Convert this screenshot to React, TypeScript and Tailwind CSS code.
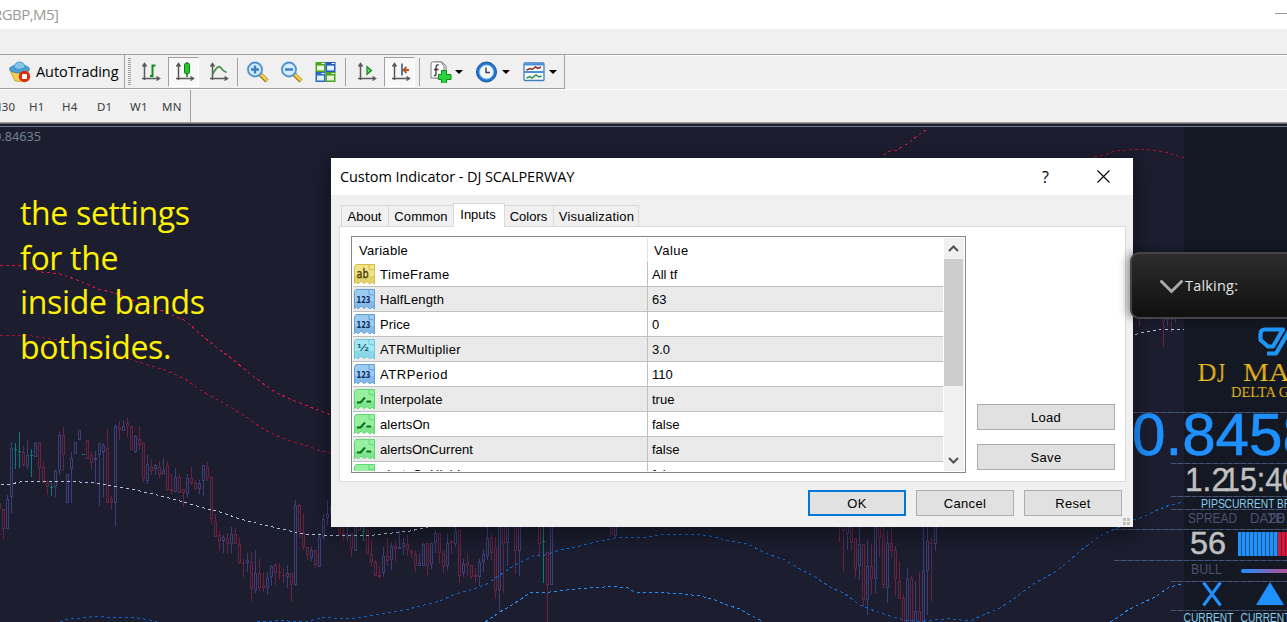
import React from "react";

type Tone = "b" | "r" | "g";
type Candle = [number, number, number, number, number, Tone];

const TONES: Record<Tone, string> = { b: "#3a3f78", r: "#69233f", g: "#067f74" };

// Candles are [x, high, body top, body bottom, low, tone] in thirds of a pixel, relative to each segment's origin.
const SEGMENTS: { x: number; y: number; candles: Candle[] }[] = [
  {
    x: 0,
    y: 400,
    candles: [
      [-2, 310, 310, 328, 328, "r"], [10, 328, 328, 386, 416, "r"], [22, 286, 298, 386, 386, "b"], [34, 126, 145, 290, 338, "b"],
      [46, 130, 148, 148, 206, "g"], [58, 96, 154, 154, 204, "g"], [70, 138, 156, 195, 197, "r"], [82, 121, 166, 197, 206, "b"],
      [94, 147, 166, 166, 230, "g"], [106, 126, 130, 170, 170, "b"], [118, 127, 127, 203, 243, "r"], [130, 184, 202, 250, 250, "r"],
      [142, 240, 250, 262, 286, "r"], [154, 250, 262, 262, 288, "g"], [166, 210, 214, 262, 292, "b"], [178, 96, 106, 214, 224, "b"],
      [190, 81, 106, 166, 212, "r"], [202, 222, 223, 308, 308, "b"], [214, 156, 175, 206, 308, "b"], [226, 127, 127, 163, 163, "b"],
      [238, 91, 91, 119, 119, "b"], [250, 163, 163, 163, 163, "g"], [262, 121, 121, 176, 176, "r"], [274, 156, 166, 188, 206, "r"],
      [286, 154, 175, 179, 252, "b"], [298, 130, 130, 166, 318, "b"], [310, 129, 136, 157, 290, "b"], [322, 88, 145, 308, 308, "r"],
      [334, 288, 298, 308, 330, "r"], [346, 72, 79, 308, 378, "b"], [358, 63, 82, 89, 119, "r"], [370, 60, 79, 92, 92, "b"],
      [382, 54, 70, 79, 110, "r"], [394, 79, 79, 149, 149, "r"], [406, 106, 109, 155, 158, "b"], [418, 79, 118, 136, 150, "r"],
      [430, 127, 130, 236, 245, "r"], [442, 166, 193, 242, 251, "b"], [454, 178, 202, 212, 224, "r"], [466, 192, 196, 206, 224, "b"],
      [478, 184, 202, 224, 233, "r"], [490, 175, 211, 223, 223, "b"], [502, 184, 196, 269, 272, "r"], [514, 223, 268, 272, 281, "r"],
      [526, 205, 232, 277, 277, "b"], [538, 223, 232, 278, 278, "r"], [550, 268, 268, 280, 320, "r"], [562, 223, 235, 281, 293, "b"],
      [574, 202, 235, 250, 256, "r"], [586, 240, 250, 268, 268, "r"], [598, 240, 250, 268, 281, "b"], [610, 196, 196, 244, 287, "b"],
      [622, 187, 202, 233, 242, "r"], [634, 229, 232, 358, 373, "r"], [646, 343, 364, 412, 412, "r"], [658, 394, 406, 422, 452, "r"],
      [670, 405, 412, 424, 458, "b"], [682, 400, 415, 431, 461, "r"], [694, 381, 403, 433, 458, "b"], [706, 385, 403, 433, 433, "r"],
      [718, 412, 433, 488, 491, "r"], [730, 478, 488, 491, 530, "r"], [742, 460, 481, 490, 515, "b"], [754, 457, 487, 566, 602, "r"],
      [766, 451, 520, 572, 578, "b"], [778, 478, 520, 563, 572, "r"], [790, 517, 556, 563, 575, "r"], [802, 515, 535, 563, 584, "b"],
      [814, 495, 499, 530, 557, "b"], [826, 490, 496, 518, 554, "r"], [838, 490, 517, 520, 539, "r"], [850, 505, 526, 529, 548, "r"],
      [862, 496, 520, 530, 563, "b"], [874, 520, 520, 554, 605, "r"], [886, 301, 316, 554, 557, "b"], [898, 311, 316, 395, 413, "r"],
      [910, 338, 400, 442, 449, "r"], [922, 442, 442, 464, 479, "r"], [934, 442, 451, 473, 482, "b"], [946, 451, 451, 496, 505, "r"],
      [958, 400, 412, 500, 500, "b"], [970, 343, 358, 412, 421, "b"], [982, 301, 343, 355, 375, "b"], [994, 319, 319, 346, 346, "b"],
    ],
  },
  {
    x: 330,
    y: 520,
    candles: [
      [28, 0, 0, 44, 44, "r"], [40, 0, 40, 44, 62, "r"], [52, 0, 43, 53, 65, "b"], [64, 40, 40, 88, 112, "r"], [76, 0, 0, 92, 92, "b"],
      [88, 0, 0, 32, 32, "r"], [100, 0, 32, 32, 62, "g"], [112, 30, 30, 101, 101, "r"], [124, 61, 102, 127, 137, "r"],
      [136, 121, 127, 167, 167, "r"], [148, 139, 166, 170, 176, "r"], [160, 82, 109, 160, 170, "b"], [172, 55, 109, 122, 137, "r"],
      [184, 70, 79, 119, 149, "b"], [196, 64, 79, 88, 122, "r"], [208, 31, 81, 88, 88, "b"], [220, 55, 70, 80, 104, "b"],
      [232, 46, 73, 89, 109, "r"], [244, 91, 91, 100, 113, "r"], [256, 90, 103, 137, 155, "r"], [268, 100, 128, 139, 139, "b"],
      [280, 68, 73, 139, 139, "b"], [292, 70, 70, 137, 167, "r"], [304, 70, 70, 131, 146, "b"], [316, 31, 40, 70, 100, "b"],
      [328, 40, 40, 100, 128, "r"], [340, 91, 100, 140, 158, "r"], [352, 43, 70, 137, 149, "b"], [364, 61, 64, 70, 103, "r"],
      [376, 0, 32, 73, 82, "b"], [388, 31, 31, 167, 188, "r"], [400, 118, 131, 160, 170, "b"], [412, 103, 128, 139, 167, "r"],
      [424, 136, 136, 170, 176, "r"], [436, 145, 166, 170, 188, "r"], [448, 118, 127, 170, 197, "b"], [460, 88, 103, 127, 155, "b"],
      [472, 0, 55, 109, 121, "b"], [484, 40, 52, 100, 121, "r"], [496, 52, 82, 214, 236, "r"], [508, 0, 0, 211, 277, "b"],
      [520, 0, 0, 73, 218, "r"], [532, 0, 0, 70, 137, "b"], [556, 0, 0, 92, 161, "r"], [568, 0, 0, 92, 167, "b"],
      [628, 0, 0, 73, 112, "r"], [640, 0, 64, 64, 188, "g"], [652, 97, 97, 196, 310, "r"], [664, 0, 0, 196, 196, "b"],
      [844, 0, 0, 44, 44, "r"], [856, 0, 0, 47, 53, "b"],
    ],
  },
  {
    x: 720,
    y: 520,
    candles: [
      [358, 0, 0, 3, 66, "r"], [370, 0, 0, 34, 155, "r"], [382, 0, 0, 41, 89, "b"], [394, 0, 0, 70, 89, "r"], [406, 55, 55, 146, 170, "r"],
      [418, 0, 73, 139, 179, "b"], [430, 73, 73, 241, 260, "r"], [442, 61, 139, 241, 284, "b"], [454, 73, 139, 176, 224, "r"],
      [466, 0, 0, 178, 218, "b"], [478, 0, 0, 53, 110, "r"], [490, 0, 43, 196, 206, "r"], [502, 34, 70, 203, 250, "b"],
      [514, 0, 70, 92, 113, "r"], [526, 79, 91, 178, 227, "r"], [538, 127, 184, 236, 236, "r"], [550, 226, 235, 315, 315, "r"],
      [562, 145, 178, 315, 315, "b"], [574, 169, 175, 315, 315, "r"], [586, 184, 274, 315, 315, "b"], [598, 157, 274, 315, 315, "r"],
      [610, 0, 154, 315, 315, "b"], [622, 0, 64, 154, 284, "b"], [634, 55, 70, 73, 242, "r"], [646, 0, 0, 73, 92, "b"],
    ],
  },
  {
    x: 1120,
    y: 240,
    candles: [
      [58, 220, 220, 224, 257, "r"], [82, 220, 220, 224, 240, "r"], [130, 220, 220, 245, 322, "r"], [142, 220, 230, 240, 257, "b"],
      [154, 220, 230, 240, 278, "r"], [166, 220, 220, 224, 248, "b"],
    ],
  },
];

const BANDS: [string, string][] = [
  ["#dc143c", "0,265 18,265.5 28,267 42,272 60,274 80,281 98,289 115,293 135,301 150,306 170,314 186,321 200,334 215,346 232,359 248,372 258,380 275,392 290,399 305,405 320,411 334,416"],
  ["#a8102f", "0,335.5 15,335 32,336 50,339 65,341 85,347 108,352 130,359 145,364 165,370 185,379 200,390 218,400 230,407 248,418 260,427 275,435 290,441 305,445 318,450 334,454"],
  ["#dc143c", "883,155 890,151 897,150 910,142 918,135 928,129"],
  ["#a8102f", "1094,157 1105,155 1115,150.5 1145,149.5 1162,151.5 1175,155 1184,158"],
  ["#b0c4de", "1,484.5 9,484.5 20,482 45,481.5 72,481.5 95,483 118,487 140,491 165,497 180,501 200,507 220,512 240,519 260,524 290,531 305,534 331,535.5 370,535.5 392,533 410,531 428,527 440,523"],
  ["#b0c4de", "1135,334.5 1150,331 1163,329.5 1184,329.5"],
  ["#0a66cc", "60,622 68,619 80,618 95,616.5 115,617.5 135,617.5 150,620 157,622"],
  ["#0a66cc", "257,622 280,620.5 303,622 325,617.5 333,618 342,619 355,618 370,616 385,613 405,610 420,606 440,601 455,594 470,590 485,585 500,575 515,565 525,560 533,556 545,555 560,550 580,546 600,541 620,537 640,538 660,535 680,534 695,534 710,536 720,538.5 732,541.5 748,544 765,553 785,560 800,569 815,577 830,587 845,594 860,605 875,611 890,616 905,620 920,621.5 935,620 948,618.5 970,621 985,614 1000,608 1015,598 1035,583 1055,572 1070,560 1085,547 1100,536 1110,531 1120,527 1133,520 1143,517 1155,511 1170,505 1184,502"],
  ["#1e90ff", "485,622 500,612 515,603 530,593 545,592.5 560,591 575,589 590,588 612,586.5 628,588 635,592 655,592.5 680,593.5 700,596 715,600 727,605 740,609 748,614 764,622"],
  ["#1e90ff", "1110,622 1120,616 1128,610 1140,604 1155,597 1168,588 1184,583"],
];

const LEVELS: [number, number][] = [
  [1133, 412.5], [1171, 463.5], [1171, 496.5], [1171, 509.5], [1114, 529.5], [1114, 560.5], [1171, 581.5], [1171, 610.5],
];

function CandleMark({ c, ox, oy }: { c: Candle; ox: number; oy: number }) {
  const [cx, h, bt, bb, l, tone] = c;
  const x = ox + Math.floor(cx / 3);
  const y = (v: number) => oy + Math.round(v / 3);
  const fill = TONES[tone];
  const top = y(bt);
  const bottom = Math.max(y(bb), top + 1);
  const hollow = bottom - top > 2;
  return (
    <g>
      {top > y(h) && <rect x={x} y={y(h)} width={1} height={top - y(h)} fill={fill} />}
      {y(l) > bottom && <rect x={x} y={bottom} width={1} height={y(l) - bottom} fill={fill} />}
      {hollow ? (
        <rect x={x - 0.5} y={top + 0.5} width={2} height={bottom - top - 1} fill="none" stroke={fill} />
      ) : (
        <rect x={x - 1} y={top} width={3} height={bottom - top} fill={fill} />
      )}
    </g>
  );
}

function T(p: { x: number; y: number; w: number; s: number; f: string; children: string; family?: string; bold?: number }) {
  return (
    <text x={p.x} y={p.y} fontSize={p.s} fill={p.f} stroke={p.bold ? p.f : "none"} strokeWidth={p.bold ?? 0} textLength={p.w} lengthAdjust="spacingAndGlyphs" fontFamily={p.family ?? "Liberation Sans, sans-serif"}>
      {p.children}
    </text>
  );
}

function Chart() {
  return (
    <svg className="absolute inset-0" width="1287" height="498" viewBox="0 124 1287 498">
      <defs>
        <linearGradient id="trend" x1="1241" x2="1300" y1="0" y2="0" gradientUnits="userSpaceOnUse">
          <stop offset="0" stopColor="#1e90ff" />
          <stop offset="1" stopColor="#dc3c78" />
        </linearGradient>
        <linearGradient id="gold" x1="0" x2="0" y1="0" y2="1">
          <stop offset="0" stopColor="#f5d21e" />
          <stop offset="0.5" stopColor="#d39a14" />
          <stop offset="1" stopColor="#f7e02a" />
        </linearGradient>
      </defs>
      <rect x="0" y="126" width="1287" height="1" fill="#6c7b8d" />
      <rect x="1184" y="127" width="103" height="495" fill="#141822" />
      <g shapeRendering="crispEdges">
        {SEGMENTS.map((s) => s.candles.map((c, i) => <CandleMark key={`${s.x}-${i}`} c={c} ox={s.x} oy={s.y} />))}
        {BANDS.map(([color, points], i) => (
          <polyline key={i} points={points} fill="none" stroke={color} strokeDasharray="3 3" />
        ))}
        {LEVELS.map(([x, y], i) => (
          <g key={i}>
            <line x1={x} x2="1287" y1={y} y2={y} stroke="#2f3a55" />
            <line x1={x} x2="1287" y1={y} y2={y} stroke="#465577" strokeDasharray="5 2" />
          </g>
        ))}
      </g>
      <T x={-6} y={141} w={47} s={12.5} f="#708090" family="Noto Sans, sans-serif">0.84635</T>
      <path d="M1265 329.500H1283L1273 346.500H1268L1260.500 340V334Q1260.500 329.500 1265 329.500ZM1289 331L1276 353.500H1267" fill="none" stroke="#1e96f5" strokeWidth="4.200" strokeLinejoin="round" />
      <T x={1197.500} y={380.500} w={19} s={26} f="url(#gold)" family="Liberation Serif, serif">D</T>
      <T x={1217} y={381.500} w={8} s={27} f="url(#gold)" family="Liberation Serif, serif">J</T>
      <T x={1243} y={380.500} w={66} s={26} f="url(#gold)" family="Liberation Serif, serif">MAR</T>
      <T x={1231} y={397} w={88} s={15.500} f="url(#gold)" family="Liberation Serif, serif">DELTA GOLD</T>
      <T x={1132} y={454.500} w={184} s={59.500} f="#1e90ff" bold={0.7}>0.8458</T>
      <T x={1185} y={491} w={44} s={34} f="#c0c0c0" bold={0.4}>1.2</T>
      <T x={1223} y={491} w={76} s={34} f="#c0c0c0" bold={0.4}>15:40</T>
      <T x={1201} y={508} w={24} s={12.500} f="#87ceeb">PIPS</T>
      <T x={1224.500} y={508} w={50} s={12.500} f="#87ceeb">CURRENT</T>
      <T x={1277} y={508} w={34} s={12.500} f="#87ceeb">BREAK</T>
      <T x={1188} y={523} w={49} s={14.500} f="#4a5170">SPREAD</T>
      <T x={1250} y={523} w={34} s={14.500} f="#4a5170">DATE</T>
      <T x={1268} y={523} w={30} s={14.500} f="#4a5170">20.0</T>
      <T x={1190} y={553.500} w={36} s={32} f="#c0c0c0" bold={0.5}>56</T>
      <rect x="1238" y="532" width="40" height="24" fill="#23547f" />
      <rect x="1278" y="532" width="9" height="24" fill="#6e1c38" />
      {Array.from({ length: 13 }, (_, i) => (
        <rect key={i} x={1238 + i * 4} y={532} width={3} height={24} fill={i < 10 ? "#1e90ff" : "#dc143c"} />
      ))}
      <T x={1191} y={574} w={31} s={15} f="#4a5170">BULL</T>
      <rect x="1241" y="569" width="52" height="4" rx="2" fill="url(#trend)" />
      <path d="M1203.500 582.500L1220.500 605.500M1220.500 582.500L1203.500 605.500" stroke="#1e90ff" strokeWidth="3" />
      <path d="M1270 582L1284 605H1256Z" fill="#1e90ff" />
      <T x={1183.500} y={622} w={50} s={12.500} f="#87ceeb">CURRENT</T>
      <T x={1240.500} y={622} w={50} s={12.500} f="#87ceeb">CURRENT</T>
    </svg>
  );
}

const Axes = () => <path d="M3.500 18V2M1.500 4.500L3.500 1.500L5.500 4.500M1 16.500H18M15.500 14.500L18.500 16.500L15.500 18.500" fill="none" stroke="#5a5a5a" strokeWidth="1.500" />;

function Icon({ children, className }: { children: React.ReactNode; className?: string }) {
  return (
    <svg width="22" height="22" viewBox="0 0 22 22" className={`shrink-0 ${className ?? ""}`}>
      {children}
    </svg>
  );
}

function Robot() {
  return (
    <Icon>
      <path d="M1 9.500L6 20Q12 22 16 18L20 9Z" fill="#f3cf55" stroke="#c79a28" strokeWidth=".8" />
      <ellipse cx="10.500" cy="8" rx="10" ry="4" fill="#4b9fd8" stroke="#2a79ad" strokeWidth=".8" />
      <path d="M5 7C5 -1 16 -1 16 7Q10 10 5 7Z" fill="#83c4ec" stroke="#3684b5" strokeWidth=".8" />
      <circle cx="15.500" cy="15.500" r="5.700" fill="#db2d0c" />
      <rect x="13" y="13" width="5" height="5" rx=".8" fill="#fff" />
    </Icon>
  );
}

function Magnifier({ plus }: { plus?: boolean }) {
  return (
    <Icon>
      <path d="M13 13L20 20" stroke="#9a741c" strokeWidth="4.500" />
      <path d="M13.500 13L20 19.500" stroke="#f3cd45" strokeWidth="2.600" />
      <circle cx="8" cy="8.500" r="7" fill="#d3ebfb" stroke="#4f93cf" strokeWidth="1.900" />
      <path d={plus ? "M4 8.500H12M8 4.500V12.500" : "M4 8.500H12"} stroke="#3a7fc6" strokeWidth="2.400" />
    </Icon>
  );
}

function Pane({ x, y, c, d }: { x: number; y: number; c: string; d: string }) {
  return (
    <g>
      <rect x={x} y={y} width="10" height="10" fill={c} />
      <rect x={x + 1.500} y={y + 3.500} width="7" height="5" fill={d} />
      <path d={`M${x + 3} ${y + 5.500}H${x + 7}M${x + 6} ${y + 1.500}H${x + 9}`} stroke="#fff" />
    </g>
  );
}

const Caret = () => (
  <svg width="8" height="4" viewBox="0 0 8 4" className="mt-[1px] shrink-0">
    <path d="M0 0H8L4 4Z" fill="#000" />
  </svg>
);

const Divider = () => <div className="h-[28px] w-px shrink-0 bg-[#a0a0a0]" />;
const pressed = "flex h-[30px] w-[31px] shrink-0 items-center border border-t-[#a0a0a0] border-l-[#a0a0a0] border-r-white border-b-white bg-[#f8f8f8]";

function Toolbar() {
  return (
    <div className="flex h-[34px] w-[565px] border-r border-b border-[#a0a0a0] bg-[#f0f0f0]">
      <div className="flex w-[125px] shrink-0 items-center border-r border-[#a0a0a0] pl-[9px]">
        <Robot />
        <span className="ml-[5px] text-[14.5px] tracking-[-0.07px] whitespace-nowrap text-black">AutoTrading</span>
      </div>
      <div className="flex items-center">
        <div className="ml-[3px] h-[28px] w-[3px] bg-[repeating-linear-gradient(#a0a0a0_0_1px,#f0f0f0_1px_2px)]" />
        <Icon className="mt-[3px] ml-[10px]">
          <Axes />
          <path d="M9 14H11.500V3.500H14.500" fill="none" stroke="#158a1c" strokeWidth="2" />
        </Icon>
        <div className={`${pressed} ml-[5px]`}>
          <Icon className="mt-[3px] ml-[6px]">
            <Axes />
            <path d="M12 0V15" stroke="#117d17" strokeWidth="1.600" />
            <rect x="9.500" y="1.500" width="5" height="10" rx="1" fill="#22c532" stroke="#117d17" />
          </Icon>
        </div>
        <Icon className="mt-[3px] ml-[10px]">
          <Axes />
          <path d="M3.500 12.500Q9 2 11.500 5.500T17.500 10.500" fill="none" stroke="#4a9450" strokeWidth="1.800" />
        </Icon>
        <div className="w-[6px]" />
        <Divider />
        <div className="ml-[9px] flex">
          <Magnifier plus />
        </div>
        <div className="ml-[12px] flex">
          <Magnifier />
        </div>
        <Icon className="ml-[12px]">
          <Pane x={0.500} y={1} c="#49a51d" d="#e4f2cf" />
          <Pane x={10.500} y={1} c="#2057bd" d="#dcebfa" />
          <Pane x={0.500} y={11} c="#2d68c5" d="#dcebfa" />
          <Pane x={10.500} y={11} c="#49a51d" d="#e4f2cf" />
        </Icon>
        <div className="w-[8px]" />
        <Divider />
        <Icon className="mt-[3px] ml-[11px]">
          <Axes />
          <path d="M10 4.500V12.500L14.500 8.500Z" fill="#5bd46a" stroke="#178722" strokeWidth="1.200" />
        </Icon>
        <div className={`${pressed} ml-[5px]`}>
          <Icon className="mt-[3px] ml-[6px]">
            <Axes />
            <path d="M11 1.500V13.500" stroke="#1b5fa8" strokeWidth="1.600" />
            <path d="M18 8H13M15.500 5L12.500 8L15.500 11" fill="none" stroke="#c1521c" strokeWidth="1.800" />
          </Icon>
        </div>
        <div className="w-[4px]" />
        <Divider />
        <Icon className="ml-[10px]">
          <path d="M5 1H12L16 5V17H5Z" fill="#fff" stroke="#777" />
          <path d="M1 2V17H14V5L11 1H2Z" fill="#fff" stroke="#808080" />
          <path d="M9 4Q6 3 6 7V13Q6 15 4 14.500M4 8.500H8.500" fill="none" stroke="#333" strokeWidth="1.300" />
          <path d="M10.500 12.500V8.500H15.500V12.500H20V17.500H15.500V21.500H10.500V17.500H7.500V12.500Z" transform="translate(1 1)" fill="#27d63b" stroke="#128420" />
        </Icon>
        <div className="ml-[3px] flex">
          <Caret />
        </div>
        <Icon className="ml-[13px]">
          <circle cx="10.500" cy="11" r="10" fill="#2376d0" stroke="#14529f" />
          <circle cx="10.500" cy="11" r="7" fill="#f4f7fb" stroke="#8ac5f5" />
          <path d="M10 6.500V11.500H14" fill="none" stroke="#444" strokeWidth="1.500" />
        </Icon>
        <div className="ml-[4px] flex">
          <Caret />
        </div>
        <Icon className="ml-[13px]">
          <rect x="1" y="2" width="20" height="17.500" rx="1" fill="#f6fafd" stroke="#3f7fc0" strokeWidth="1.300" />
          <path d="M1 3.500H21M1 11H21" stroke="#4f92d3" strokeWidth="2" />
          <path d="M3.500 9L7 7.500L9 8.500L12.500 6L15 7.500L18 6" fill="none" stroke="#8c2c17" strokeWidth="1.500" />
          <path d="M3.500 17L7 15.500L9 17L13 14L16 16L18.500 15" fill="none" stroke="#2b9143" strokeWidth="1.500" />
        </Icon>
        <div className="ml-[4px] flex">
          <Caret />
        </div>
      </div>
    </div>
  );
}

const FRAMES: [string, string][] = [
  ["M30", "-ml-[9px] w-[38px]"],
  ["H1", "w-[33px]"],
  ["H4", "w-[35px]"],
  ["D1", "w-[33px]"],
  ["W1", "w-[32px]"],
  ["MN", "w-[27px]"],
];

type Kind = "ab" | "int" | "real" | "bool";
const NOTE: Record<Kind, [string, string, string]> = {
  ab: ["#f2e288", "#d5bd48", "#4f4310"],
  int: ["#9dccf3", "#659fd6", "#0d2d5c"],
  real: ["#a5e6f3", "#6cc6dc", "#175a70"],
  bool: ["#97f0a0", "#5fd873", "#0f6a20"],
};

function NoteIcon({ kind }: { kind: Kind }) {
  const [light, dark, ink] = NOTE[kind];
  return (
    <svg width="21" height="21" viewBox="0 0 21 21" className="shrink-0">
      <path d="M1 2L2 .5H15L20.500 6V20L18 18L16 20L13 17.500L10 19.500L7 17L4 20L2.500 18L.5 19.500V3Z" fill={light} stroke={dark} />
      <path d="M1 12H20V19L18 17.500L16 19L13 17L10 19L7 16.500L4 19L2.500 17.500L1 18.500Z" fill={dark} opacity=".45" />
      <path d="M15 .5H20.500V6L15 5.500Z" fill={light} stroke={dark} />
      {kind === "bool" ? (
        <path d="M3 13.500H6.500L11 8.500M12.500 12.500H17" fill="none" stroke={ink} strokeWidth="2" />
      ) : (
        <text x={kind === "real" ? 3 : 2.500} y={kind === "real" ? 12 : 14} fill={ink} textLength={kind === "real" ? 12 : kind === "ab" ? 12 : 14} lengthAdjust="spacingAndGlyphs" fontSize={kind === "ab" ? 11.500 : 9} fontWeight={kind === "ab" ? 400 : 700} stroke={ink} strokeWidth={kind === "ab" ? 0.4 : 0} fontFamily="DejaVu Sans, sans-serif">
          {kind === "ab" ? "ab" : kind === "int" ? "123" : "½"}
        </text>
      )}
    </svg>
  );
}

const ROWS: [Kind, string, string, string][] = [
  ["ab", "TimeFrame", "All tf", "tracking-[0.42px]"],
  ["int", "HalfLength", "63", "tracking-[0.12px]"],
  ["int", "Price", "0", "tracking-[0.1px]"],
  ["real", "ATRMultiplier", "3.0", "tracking-[0.3px]"],
  ["int", "ATRPeriod", "110", "tracking-[0.6px]"],
  ["bool", "Interpolate", "true", "tracking-[0.1px]"],
  ["bool", "alertsOn", "false", "tracking-[0.1px]"],
  ["bool", "alertsOnCurrent", "false", "tracking-[0.03px]"],
  ["bool", "alertsOnHighLow", "false", "tracking-[0.1px]"],
];

function InputList() {
  return (
    <div className="flex h-[237px] w-[615px] shrink-0 border border-[#828790] bg-white p-px">
      <div className="flex h-[233px] w-[590px] flex-col overflow-hidden">
        <div className="flex h-[24px] shrink-0 items-center">
          <span className="flex h-[24px] w-[295px] items-center border-r border-[#e3e3e3] pt-[2px] pl-[6px] tracking-[0.3px]">Variable</span>
          <span className="pt-[2px] pl-[6px] tracking-[0.5px]">Value</span>
        </div>
        {ROWS.map(([kind, name, value, track], i) => (
          <div key={name} className={`flex h-[25px] shrink-0 border-b border-[#c0c0c0] ${i % 2 ? "bg-[#eaeaea]" : "bg-white"}`}>
            <div className="flex h-[24px] w-[295px] items-center border-r border-[#c0c0c0] pl-px">
              <NoteIcon kind={kind} />
              <span className={`ml-[5px] pt-[2px] ${track}`}>{name}</span>
            </div>
            <span className="flex items-center pt-[2px] pl-[4px]">{value}</span>
          </div>
        ))}
      </div>
      <div className="ml-px flex w-[20px] flex-col items-start bg-[#f0f0f0]">
        <svg width="19" height="21" viewBox="0 0 19 21" className="shrink-0">
          <path d="M5 13L9.500 8.500L14 13" fill="none" stroke="#505050" strokeWidth="2" />
        </svg>
        <div className="h-[127px] w-[19px] bg-[#cdcdcd]" />
        <div className="grow" />
        <svg width="19" height="21" viewBox="0 0 19 21" className="shrink-0">
          <path d="M5 8L9.500 12.500L14 8" fill="none" stroke="#505050" strokeWidth="2" />
        </svg>
      </div>
    </div>
  );
}

const button = "flex h-[26px] items-center justify-center bg-[#e1e1e1] pt-[2px] tracking-[0.3px]";
const tab = "mt-[2px] flex h-[21px] items-center justify-center border-t border-r border-[#d9d9d9] pt-[2px]";

function Dialog() {
  return (
    <div className="absolute top-[158px] left-[331px] h-[369px] w-[802px] bg-[#f0f0f0] font-['Liberation_Sans',sans-serif] text-[13px] text-black shadow-[0_6px_18px_4px_rgba(0,0,0,0.35)]">
      <div className="flex h-[37px] items-center bg-white pl-[9px] font-['Open_Sans',sans-serif]">
        <span className="w-[694px] text-[14.5px] tracking-[-0.08px]">Custom Indicator - DJ SCALPERWAY</span>
        <span className="w-[63px] pl-[8px] text-[16px]">?</span>
        <svg width="13" height="13" viewBox="0 0 13 13">
          <path d="M.5 .5L12.500 12.500M12.500 .5L.5 12.500" stroke="#000" strokeWidth="1.100" />
        </svg>
      </div>
      <div className="relative z-10 mt-[8px] ml-[10px] flex h-[24px]">
        <div className={`${tab} w-[48px] border-l pr-[1px]`}>About</div>
        <div className={`${tab} w-[64px] border-r-0 tracking-[0.1px]`}>Common</div>
        <div className="flex h-[24px] w-[52px] items-center justify-center border border-b-0 border-[#d9d9d9] bg-white pr-[2px] pb-[1px]">Inputs</div>
        <div className={`${tab} w-[49px] pr-[1px]`}>Colors</div>
        <div className={`${tab} w-[85px] pl-[1px] tracking-[0.2px]`}>Visualization</div>
      </div>
      <div className="-mt-px ml-[8px] flex h-[256px] w-[787px] border border-[#dcdcdc] bg-white pt-[9px] pl-[11px]">
        <InputList />
        <div className="mt-[168px] ml-[11px] flex flex-col gap-[14px]">
          <div className={`${button} w-[138px] border border-[#adadad]`}>Load</div>
          <div className={`${button} w-[138px] border border-[#adadad]`}>Save</div>
        </div>
      </div>
      <div className="mt-[8px] ml-[477px] flex gap-[10px]">
        <div className={`${button} w-[98px] border-2 border-[#0078d7]`}>OK</div>
        <div className={`${button} w-[98px] border border-[#adadad]`}>Cancel</div>
        <div className={`${button} w-[98px] border border-[#adadad]`}>Reset</div>
      </div>
      <div className="absolute right-[3px] bottom-[2px] grid grid-cols-2 gap-px">
        {[0, 1, 2, 3].map((k) => (
          <div key={k} className="size-[3px] bg-[#bfbfbf]" />
        ))}
      </div>
    </div>
  );
}

export default function App() {
  return (
    <div className="relative flex h-[622px] w-[1287px] flex-col overflow-hidden bg-[#f0f0f0] font-['Open_Sans',sans-serif]">
      <div className="flex h-[29px] shrink-0 items-center justify-between bg-white">
        <span className="-ml-[7px] text-[15px] tracking-[-0.55px] text-[#999]">RGBP,M5]</span>
        <div className="-mt-[3px] h-px w-[12px] bg-[#999]" />
      </div>
      <div className="h-[26px] shrink-0 border-b border-[#a0a0a0]" />
      <div className="h-px shrink-0 bg-white" />
      <div className="-mt-px flex h-[34px] shrink-0">
        <Toolbar />
      </div>
      <div className="flex h-[33px] shrink-0 border-t border-white">
        <div className="flex h-[32px] w-[191px] items-center border-r border-[#a0a0a0] pt-[1px] font-['Noto_Sans',sans-serif] text-[11.5px] tracking-[0.2px] text-[#3c3c3c]">
          {FRAMES.map(([label, size]) => (
            <span key={label} className={`shrink-0 ${size}`}>{label}</span>
          ))}
        </div>
      </div>
      <div className="h-[2px] shrink-0 border-t border-b border-t-[#a0a0a0] border-b-[#696969]" />
      <div className="relative h-[498px] shrink-0 bg-[#1c1e30]">
        <Chart />
      </div>
      <div className="absolute top-[191px] left-[20px] text-[32px] leading-[44.600px] tracking-[-0.33px] whitespace-pre text-[#fff200]">
        <div>the settings</div>
        <div>for the</div>
        <div>inside bands</div>
        <div>bothsides.</div>
      </div>
      <Dialog />
      <div className="absolute top-[252px] left-[1130px] flex h-[67px] w-[170px] items-center rounded-[9px] border-2 border-[#454547] bg-linear-to-b from-[#2d2d2e] to-[#101010] pl-[28px] shadow-[-3px_0_8px_rgba(0,0,0,0.4)]">
        <svg width="23" height="14" viewBox="0 0 23 14" className="mt-[2px] shrink-0">
          <path d="M1.500 1.500L11.500 11.500L21.500 1.500" fill="none" stroke="#aaa" strokeWidth="3" strokeLinecap="round" />
        </svg>
        <span className="ml-[2px] text-[14.5px] tracking-[0.2px] text-[#e4e4e4]">Talking:</span>
      </div>
    </div>
  );
}
